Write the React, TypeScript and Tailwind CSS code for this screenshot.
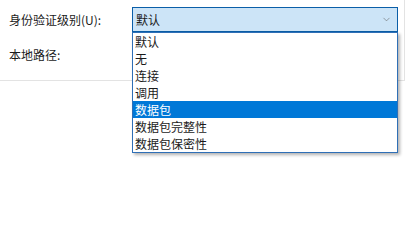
import { ChevronDown } from "lucide-react";

const options = ["默认", "无", "连接", "调用", "数据包", "数据包完整性", "数据包保密性"];

export default function App() {
  const selected = 4;

  return (
    <div
      className="relative w-[416px] h-[225px] bg-white text-[12px] text-[#1a1a1a] overflow-hidden"
      style={{ fontFamily: '"Noto Sans CJK SC", "Noto Sans", sans-serif' }}
    >
      <div className="w-[405px] h-[81px] border-r border-b border-[#e3e3e3] pt-[7px]">
        <div className="flex items-center h-[25px]">
          <span className="w-[132px] pl-[9px] leading-none">身份验证级别(U):</span>
          <div className="flex items-center justify-between w-[266px] h-[25px] border border-[#0a5ea8] bg-[#cce4f7] pl-[3px] pr-[5px]">
            <span className="leading-none">默认</span>
            <ChevronDown className="w-[11px] h-[11px] text-[#606060]" strokeWidth={1.25} />
          </div>
        </div>
        <div className="flex items-center h-[22px] mt-[12px]">
          <span className="pl-[9px] leading-none">本地路径:</span>
        </div>
      </div>

      {/* dropdown list */}
      <div className="absolute left-[132px] top-[32px] w-[266px] border border-[#2f6fb6] bg-white shadow-[2px_2px_3px_rgba(0,0,0,0.3)]">
        {options.map((opt, i) => (
          <div
            key={opt}
            className={
              i === selected
                ? "h-[17px] flex items-center pl-[2px] bg-[#0078d7] text-white leading-none"
                : "h-[17px] flex items-center pl-[2px] leading-none"
            }
          >
            {opt}
          </div>
        ))}
      </div>
    </div>
  );
}
